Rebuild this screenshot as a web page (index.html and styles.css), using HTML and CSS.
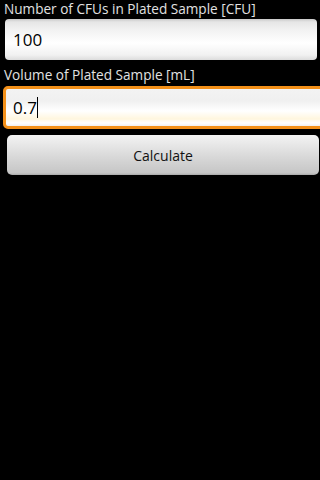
FILE: index.html
```html
<!DOCTYPE html>
<html>
<head>
<meta charset="utf-8">
<link rel="stylesheet" href="styles.css">
</head>
<body>
<div class="form">
  <div class="label">Number of CFUs in Plated Sample [CFU]</div>
  <div class="field"><span class="value">100</span></div>
  <div class="label label-second">Volume of Plated Sample [mL]</div>
  <div class="field field-focused"><span class="value">0.7</span><span class="cursor"></span></div>
  <div class="button">Calculate</div>
</div>
</body>
</html>
```
FILE: styles.css
```css
html, body {
  margin: 0;
  padding: 0;
  background: #000;
  width: 320px;
  height: 480px;
  overflow: hidden;
  font-family: "Open Sans", "DejaVu Sans", sans-serif;
}
.form {
  display: flex;
  flex-direction: column;
}
.label {
  color: #e2e2e2;
  font-size: 13.6px;
  line-height: 18px;
  height: 19px;
  padding-left: 4px;
  white-space: nowrap;
}
.label-second {
  margin-top: 6px;
  height: 19px;
  line-height: 18px;
}
.field {
  box-sizing: border-box;
  margin: 0 3px 0 5px;
  height: 41px;
  border-radius: 4px;
  background: linear-gradient(to bottom, #c9c9c9 0px, #e6e6e6 3px, #f3f3f3 12px, #ffffff 24px, #f1f1f1 36px, #dcdcdc 41px);
  display: flex;
  align-items: center;
  padding-left: 8px;
  color: #000;
  font-size: 17px;
}
.field-focused {
  margin: 1px -6px 0 3px;
  height: 43px;
  border: 3px solid #f39019;
  border-radius: 5px;
  padding-left: 7px;
  background: linear-gradient(to bottom, #f3f3f3 0px, #f0f0f0 12px, #ffffff 22px, #fff6de 30px, #ffffff 34px, #efefef 37px);
}
.cursor {
  display: inline-block;
  width: 1px;
  height: 21px;
  background: #000;
  margin-left: 0;
}
.button {
  margin: 6px 1px 0 7px;
  height: 40px;
  border-radius: 5px;
  background: linear-gradient(to bottom, #f4f4f4 0px, #ececec 6px, #d8d8d8 22px, #c6c6c6 38px, #a8a8a8 40px);
  display: flex;
  align-items: center;
  justify-content: center;
  color: #111;
  font-size: 14px;
}
```
